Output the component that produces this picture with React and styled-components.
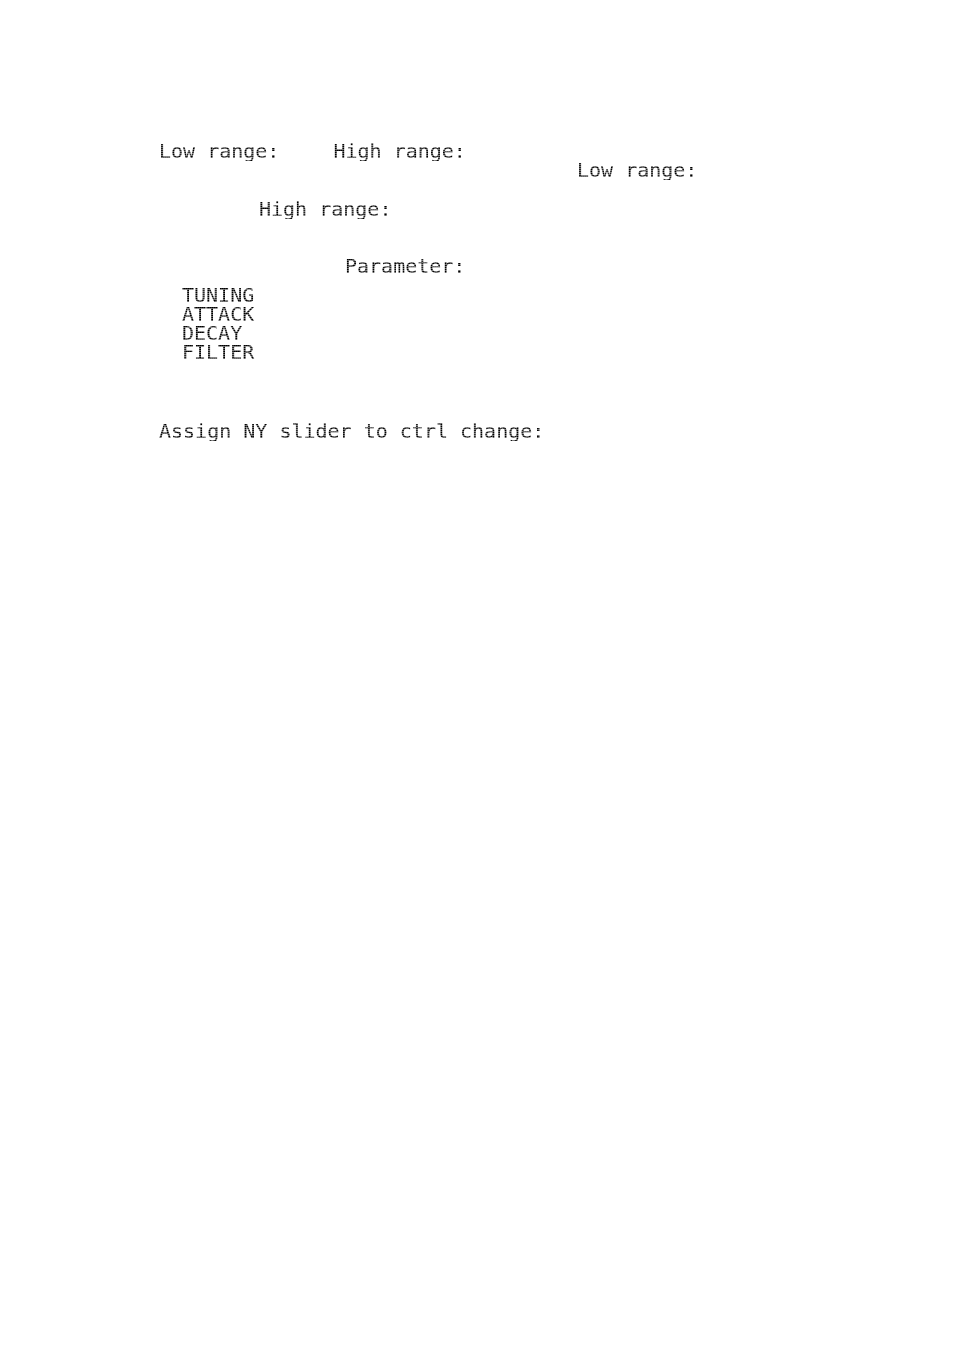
import styled, { createGlobalStyle } from "styled-components";

const parameters = ["TUNING", "ATTACK", "DECAY", "FILTER"];

export default function App() {
  return (
    <>
      <GlobalStyle />
      <Page>
        <Row>
          <Readout>Low range:</Readout>
          <Readout>High range:</Readout>
        </Row>
        <Row $indent={418}>
          <Readout>Low range:</Readout>
        </Row>
        <Row $indent={100} $space={20}>
          <Readout>High range:</Readout>
        </Row>
        <Row $indent={186} $space={38}>
          <Readout>Parameter:</Readout>
        </Row>
        <ParameterList>
          {parameters.map((name) => (
            <li key={name}>
              <Readout>{name}</Readout>
            </li>
          ))}
        </ParameterList>
        <Row $space={60}>
          <Readout>Assign NY slider to ctrl change:</Readout>
        </Row>
      </Page>
    </>
  );
}

const GlobalStyle = createGlobalStyle`
  body {
    margin: 0;
    background-color: #fff;
  }
`;

const Page = styled.main`
  padding: 142px 40px 40px 159px;
  font-family: "DejaVu Sans Mono", "Liberation Mono", monospace;
  font-size: 20px;
  line-height: 19px;
`;

const Row = styled.div`
  display: flex;
  gap: 54px;
  margin-top: ${(props) => props.$space || 0}px;
  padding-left: ${(props) => props.$indent || 0}px;
`;

// fine light lines over the letters give them an LCD look
const Readout = styled.span`
  display: block;
  white-space: nowrap;
  color: transparent;
  background-image:
    repeating-linear-gradient(90deg, transparent 0 1px, rgba(255, 255, 255, 0.15) 1px 2px),
    repeating-linear-gradient(#000 0 1px, #666 1px 2px);
  background-clip: text;
`;

const ParameterList = styled.ul`
  margin: 10px 0 0;
  padding: 0 0 0 23px;
  list-style: none;
`;
